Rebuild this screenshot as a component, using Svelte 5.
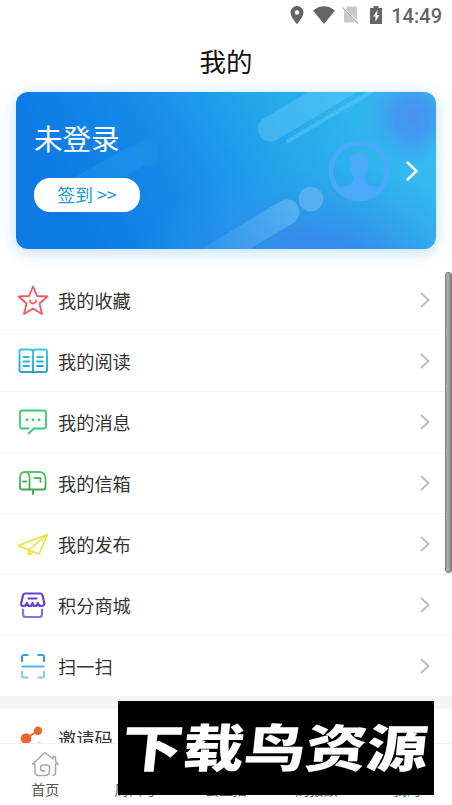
<script lang="ts">
	type Item = { icon: string; label: string };

	const items: Item[] = [
		{ icon: 'star', label: '我的收藏' },
		{ icon: 'book', label: '我的阅读' },
		{ icon: 'message', label: '我的消息' },
		{ icon: 'mailbox', label: '我的信箱' },
		{ icon: 'plane', label: '我的发布' },
		{ icon: 'shop', label: '积分商城' },
		{ icon: 'scan', label: '扫一扫' }
	];

	const tabs = ['首页', '周口号', '云直播', '周报数', '我的'];
	let activeTab = 4;
</script>

<div class="screen">
	<div class="status">
		<svg class="pin" viewBox="0 0 14 18"><path fill-rule="evenodd" d="M7 0a6.500 6.500 0 0 0-6.500 6.500C.5 11.300 7 18 7 18s6.500-6.700 6.500-11.500A6.500 6.500 0 0 0 7 0zm0 4.200a2.300 2.300 0 1 1 0 4.600 2.300 2.300 0 0 1 0-4.600z" /></svg>
		<svg class="wifi" viewBox="0 0 22 18"><path d="M0 4.500Q11-4 22 4.500L11 18z" /></svg>
		<svg class="sim" viewBox="0 0 17 18"><path d="M5 .5h9q1 0 1 1V14L3.500 3zM2 4.500L14 16.500H3q-1 0-1-1z" fill="#c8c8c8" /><path d="M.5 1.500l15.500 16" stroke="#b5b5b5" stroke-width="1.200" /></svg>
		<svg class="battery" viewBox="0 0 12 18"><path fill-rule="evenodd" d="M3.500 0h5v2H12v16H0V2h3.500zM7.500 4L3 10.500h2.500V15.500L9.500 9H7z" /></svg>
		<span class="time">14:49</span>
	</div>

	<h1>我的</h1>

	<section class="card">
		<svg class="art" viewBox="0 0 420 157" preserveAspectRatio="none">
			<defs>
				<linearGradient id="base" x1="0" y1="0.200" x2="1" y2="0">
					<stop offset="0" stop-color="#0c79e5" />
					<stop offset="0.300" stop-color="#178be8" />
					<stop offset="0.550" stop-color="#23a4ec" />
					<stop offset="0.780" stop-color="#30b6ee" />
					<stop offset="1" stop-color="#39bdf1" />
				</linearGradient>
				<radialGradient id="violet">
					<stop offset="0" stop-color="#4792f0" />
					<stop offset="0.350" stop-color="#4494f0" stop-opacity="0.850" />
					<stop offset="1" stop-color="#3ba8f0" stop-opacity="0" />
				</radialGradient>
				<radialGradient id="deep">
					<stop offset="0" stop-color="#3a83ea" />
					<stop offset="0.300" stop-color="#3987eb" stop-opacity="0.850" />
					<stop offset="1" stop-color="#329fec" stop-opacity="0" />
				</radialGradient>
				<linearGradient id="pill" x1="190" y1="170" x2="280" y2="115" gradientUnits="userSpaceOnUse">
					<stop offset="0" stop-color="#60b5f5" stop-opacity="0.150" />
					<stop offset="1" stop-color="#70c0f6" stop-opacity="0.600" />
				</linearGradient>
			</defs>
			<rect width="420" height="157" fill="url(#base)" />
			<ellipse cx="300" cy="184" rx="185" ry="115" fill="url(#deep)" />
			<circle cx="396" cy="25" r="51" fill="url(#violet)" />
			<path d="M254.500 37L350-20" stroke="#66c8f4" stroke-width="25" stroke-linecap="round" opacity=".45" />
			<path d="M272 49L370-9" stroke="#68caf5" stroke-width="4" stroke-linecap="round" opacity=".45" />
			<path d="M43 108L117 66" stroke="#279ced" stroke-width="24" stroke-linecap="round" opacity=".35" />
			<circle cx="130" cy="61" r="13" fill="#1c90e7" opacity=".65" />
			<path d="M271 120L170 181" stroke="url(#pill)" stroke-width="25" stroke-linecap="round" />
			<circle cx="295" cy="107" r="12.300" fill="#65b4f2" opacity=".75" />
		</svg>
		<div class="account">
			<h2>未登录</h2>
			<button class="sign">签到 &gt;&gt;</button>
		</div>
		<svg class="avatar" viewBox="0 0 62 62">
			<circle cx="31" cy="31" r="28" fill="none" stroke="#4aa9fa" stroke-width="5" />
			<path fill="#4aa9fa" d="M31 13c-8 0-10.500 5-9.500 12 .5 6 2.500 8 4 11v4c-1 5-9 6-15 8 5 7 12 11 20.500 11s15.500-4 20.500-11c-6-2-14-3-15-8v-4c1.500-3 3.500-5 4-11 1-7-1.500-12-9.500-12z" />
		</svg>
		<svg class="go" viewBox="0 0 12 20"><path d="M1.500 1.500L10.500 10l-9 8.500" /></svg>
	</section>

	<ul class="menu">
		{#each items as item}
			<li>
				<svg class="icon" viewBox="0 0 32 32">
					{#if item.icon === 'star'}
						<g stroke="#f0595f"><path d="M16 2.500l4 9.500 10.500.5-8 7 2.500 10.500-9-5.500L7 30l2.500-10.500-8-7L12 12z" /><path d="M13 16.500c.5 4 5.500 4 6 0" /></g>
					{:else if item.icon === 'book'}
						<g stroke="url(#cyan)" stroke-width="1.900"><path d="M16 7q0-2.500-3-2.500H4.500q-2 0-2 2V25q0 2 2 2H28q2 0 2-2V6.500q0-2-2-2h-9Q16 4.500 16 7v20" /><path d="M6.500 12h5.500M6.500 16.500h5.500M6.500 21h5.500M20 12h6M20 16.500h6M20 21h6" /></g>
					{:else if item.icon === 'message'}
						<g stroke="#37cb70"><path d="M11.500 22.500H5q-2 0-2-2v-14q0-2 2-2h22q2 0 2 2v14q0 2-2 2H17l-5.500 5" /><path d="M10 13.800h.1M16 13.800h.1M22 13.800h.1" stroke-width="2.800" /></g>
					{:else if item.icon === 'mailbox'}
						<g stroke="url(#green)"><path d="M12.500 22.500H5q-2 0-2-2V10Q3.500 5 8 5h15Q28 5.500 28.500 11v9.500q0 2-2 2h-14V10Q12 5 8 5M6 14.500h3.500M16 23v4M17.500 11h6v4" /></g>
					{:else if item.icon === 'plane'}
						<g stroke="#ede135" stroke-width="1.600"><path d="M30.500 6.500L1.500 17.500l10 4.500L30.500 6.500 22 26l-10.500-4L13 26.500l3-2.500M11.500 22v4.500" /></g>
					{:else if item.icon === 'shop'}
						<g stroke="#6140dc" stroke-width="2.200"><path d="M8 4.500h15.500q1.500 0 2 2l1.800 7.500q0 3-3 3-3 0-3.500-3-.5 3-2.700 3T15.500 14q-.5 3-2.700 3T10 14q-.5 3-3.500 3-3 0-2.300-3L6 6.500q.5-2 2-2M11.500 9.500h8" /><path d="M6 20.500v5q0 2.500 2.500 2.500h14q2.500 0 2.500-2.500v-5" stroke="#8a72ee" /></g>
					{:else}
						<g stroke-width="2" stroke-linecap="butt"><path d="M5 12V7q0-2 2-2h4.500M20.500 5H25q2 0 2 2v5" stroke="#369de1" /><path d="M4.500 16.500h23" stroke="#4fb4ea" /><path d="M5 21v4.500q0 2 2 2h4.500M20.500 27.500H25q2 0 2-2V21" stroke="#7ad0f3" /></g>
					{/if}
				</svg>
				<span>{item.label}</span>
				<svg class="arrow" viewBox="0 0 10 16"><path d="M1 1l7.500 7L1 15" /></svg>
			</li>
		{/each}
	</ul>

	<div class="invite">
		<svg class="share" viewBox="0 0 32 32">
			<path d="M9 14.500L21.500 6.500" stroke="#ed682f" stroke-width="2" />
			<g fill="#f0652a"><circle cx="9" cy="14.500" r="5.300" /><circle cx="21" cy="6.800" r="4.200" /><circle cx="22" cy="23" r="4.500" /></g>
		</svg>
		<span>邀请码</span>
	</div>

	<nav>
		{#each tabs as tab, i}
			<div class="tab" class:active={i === activeTab}>
				<svg viewBox="0 0 28 26">
					{#if i === 0}
						<path d="M7 24.500Q4 24 4 20.500V13H1.500L14 1.500 22 8V5.500h2.500v5L27 13h-2.500v8.500q0 3-3 3M7 24.500h7.500q4-.5 4-5V17q0-3-3.500-3h-2.500q-3 0-3 3t3 3h2" />
					{/if}
				</svg>
				<span>{tab}</span>
			</div>
		{/each}
	</nav>

	<div class="scrollbar"></div>

	<div class="banner">
		<svg viewBox="0 0 316 94"><text x="9" y="66" textLength="306" lengthAdjust="spacingAndGlyphs" transform="skewX(-6)">下载鸟资源</text></svg>
	</div>

	<svg class="defs">
		<defs>
			<linearGradient id="cyan" x1="0" y1="0" x2="0" y2="32" gradientUnits="userSpaceOnUse"><stop stop-color="#3fcbe6" /><stop offset="1" stop-color="#219fc8" /></linearGradient>
			<linearGradient id="green" x1="0" y1="0" x2="0" y2="32" gradientUnits="userSpaceOnUse"><stop stop-color="#5ecb6c" /><stop offset="1" stop-color="#2b9c43" /></linearGradient>
		</defs>
	</svg>
</div>

<style>
	:global(body) {
		margin: 0;
		background: #fff;
	}

	.screen {
		position: relative;
		display: flex;
		flex-direction: column;
		width: 452px;
		height: 805px;
		overflow: hidden;
		background: #fff;
		color: #333;
		font-family: 'Noto Sans CJK SC', sans-serif;
	}

	.status {
		display: flex;
		flex: 0 0 30px;
		align-items: center;
		justify-content: flex-end;
		box-sizing: border-box;
		padding-right: 10px;
		fill: #656565;
		color: #656565;
	}

	.pin {
		width: 14px;
		height: 18px;
		margin-right: 9px;
	}

	.wifi {
		width: 22px;
		height: 18px;
		margin-right: 7px;
	}

	.sim {
		width: 17px;
		height: 18px;
		margin-right: 11px;
	}

	.battery {
		width: 12px;
		height: 18px;
		margin-right: 9px;
	}

	.time {
		padding-top: 1px;
		font: 500 20px/28px Roboto, sans-serif;
	}

	h1 {
		flex: 0 0 62px;
		margin: 0;
		color: #111;
		font-size: 26.500px;
		font-weight: 400;
		line-height: 61px;
		text-align: center;
	}

	.card {
		position: relative;
		display: flex;
		flex: 0 0 157px;
		align-items: center;
		box-sizing: border-box;
		margin: 0 16px 21px;
		padding: 0 18px;
		border-radius: 12px;
		box-shadow: 0 3px 16px #1687eb48;
	}

	.art {
		position: absolute;
		inset: 0;
		width: 100%;
		height: 100%;
		border-radius: 12px;
	}

	.account {
		position: relative;
		flex: 1;
		align-self: stretch;
		padding-top: 24px;
	}

	h2 {
		margin: 0 0 19px;
		color: #fff;
		font-size: 28.500px;
		font-weight: 400;
		line-height: 43px;
	}

	.sign {
		display: block;
		width: 106px;
		height: 34px;
		padding: 0 0 2px;
		border: 0;
		border-radius: 16px;
		background: #fff;
		color: #209bd7;
		font: 17.800px/32px 'Noto Sans CJK SC', sans-serif;
	}

	.avatar {
		position: relative;
		width: 62px;
		height: 62px;
		margin-right: 16px;
	}

	.go {
		position: relative;
		width: 12px;
		height: 20px;
		fill: none;
		stroke: #fff;
		stroke-width: 2.500;
		stroke-linecap: round;
	}

	.menu {
		flex: 0 0 426px;
		margin: 0;
		padding: 0;
		list-style: none;
	}

	li {
		display: flex;
		align-items: center;
		box-sizing: border-box;
		height: 61px;
		padding: 0 22px 0 17px;
		border-bottom: 1px solid #f4f4f4;
		font-size: 18.200px;
	}

	li:last-child {
		height: 60px;
		border: 0;
	}

	.icon {
		width: 32px;
		height: 32px;
		margin-right: 9px;
		fill: none;
		stroke-width: 1.800;
		stroke-linecap: round;
		stroke-linejoin: round;
	}

	li span {
		flex: 1;
	}

	.arrow {
		width: 10px;
		height: 16px;
		fill: none;
		stroke: #bbb;
		stroke-width: 1.800;
	}

	.invite {
		display: flex;
		flex: 0 0 47px;
		align-items: flex-start;
		box-sizing: border-box;
		height: 47px;
		padding: 15px 17px 0;
		border-top: 13px solid #f5f5f5;
		overflow: hidden;
		font-size: 18.200px;
		line-height: 29px;
	}

	.share {
		flex: none;
		width: 32px;
		height: 32px;
		margin-right: 9px;
	}

	nav {
		display: flex;
		flex: 0 0 62px;
		box-sizing: border-box;
		border-top: 1px solid #f1f1f1;
		background: #fff;
	}

	.tab {
		display: flex;
		flex: 1;
		flex-direction: column;
		align-items: center;
		padding-top: 7px;
		color: #555;
		font-size: 14px;
		line-height: 22px;
	}

	.tab svg {
		width: 28px;
		height: 26px;
		margin-bottom: 1px;
		fill: none;
		stroke: #aaa;
		stroke-width: 1.500;
		stroke-linejoin: round;
	}

	.tab.active {
		color: #168dd3;
	}

	.scrollbar {
		position: absolute;
		top: 272px;
		right: 0;
		box-sizing: border-box;
		width: 7px;
		height: 301px;
		border: 1px solid #808080;
		border-radius: 3px;
		background: linear-gradient(90deg, #aaa 50%, #808080);
	}

	.banner {
		position: absolute;
		top: 701px;
		left: 118px;
		width: 316px;
		height: 94px;
		background: #000;
	}

	.banner svg {
		display: block;
		width: 316px;
		height: 94px;
	}

	.banner text {
		fill: #fff;
		font-size: 51px;
		font-weight: 900;
	}

	.defs {
		position: absolute;
		width: 0;
		height: 0;
	}
</style>
